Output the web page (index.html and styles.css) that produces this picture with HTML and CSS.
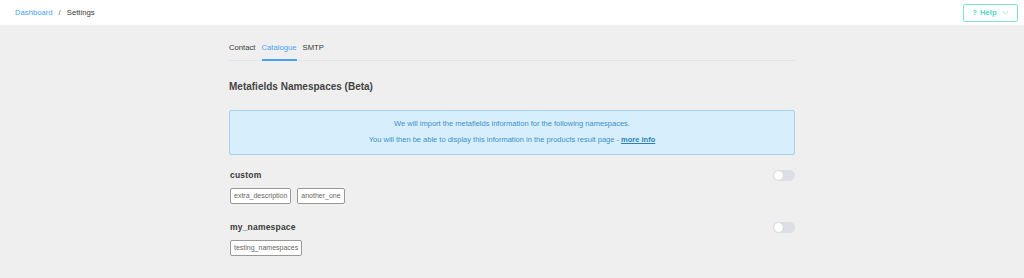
FILE: index.html
```html
<!DOCTYPE html>
<html>
<head>
<meta charset="utf-8">
<link rel="stylesheet" href="styles.css">
</head>
<body>
<header class="topbar">
  <nav class="crumbs">
    <a class="crumb-link" href="#">Dashboard</a>
    <span class="crumb-sep">/</span>
    <span class="crumb-current">Settings</span>
  </nav>
  <button class="help-btn"><span class="help-q">?</span> Help
    <svg class="chev" width="7" height="5" viewBox="0 0 7 5"><path d="M0.8 1.2 L3.5 3.8 L6.2 1.2" fill="none" stroke="currentColor" stroke-width="0.9"/></svg>
  </button>
</header>
<main class="content">
  <div class="tabs">
    <span class="tab">Contact</span>
    <span class="tab active">Catalogue</span>
    <span class="tab">SMTP</span>
  </div>
  <h2 class="title">Metafields Namespaces (Beta)</h2>
  <div class="alert">
    <p>We will import the metafields information for the following namespaces.</p>
    <p>You will then be able to display this information in the products result page - <a href="#" class="more">more info</a></p>
  </div>
  <section class="ns">
    <div class="ns-head">
      <span class="ns-name">custom</span>
      <span class="switch"><span class="knob"></span></span>
    </div>
    <div class="tags">
      <span class="tag">extra_description</span>
      <span class="tag">another_one</span>
    </div>
  </section>
  <section class="ns">
    <div class="ns-head">
      <span class="ns-name">my_namespace</span>
      <span class="switch"><span class="knob"></span></span>
    </div>
    <div class="tags">
      <span class="tag">testing_namespaces</span>
    </div>
  </section>
</main>
</body>
</html>
```
FILE: styles.css
```css
html, body { margin: 0; padding: 0; }
body {
  background: #efefef;
  font-family: "Liberation Sans", Arial, sans-serif;
  color: #303133;
  height: 278px;
  overflow: hidden;
}
.topbar {
  height: 25px;
  background: #fff;
  display: flex;
  align-items: center;
  justify-content: space-between;
  padding: 0 6px 0 15px;
  box-sizing: border-box;
}
.crumbs { font-size: 7.7px; display: flex; align-items: center; gap: 6px; }
.crumb-link { color: #4aa2f8; text-decoration: none; }
.crumb-sep { color: #606266; }
.crumb-current { color: #3a3a3a; }
.help-btn {
  width: 55px;
  height: 18px;
  border: 1px solid #7fe3d8;
  border-radius: 2px;
  background: #fff;
  color: #52d6c6;
  font-family: "Liberation Sans", Arial, sans-serif;
  font-size: 7.7px;
  font-weight: bold;
  display: flex;
  align-items: center;
  justify-content: center;
  gap: 3px;
  padding: 0;
}
.help-q { font-weight: bold; }
.chev { margin-left: 2px; color: #8be5da; }
.content {
  width: 566px;
  margin: 0 auto;
  padding-top: 12px;
}
.tabs {
  display: flex;
  gap: 6px;
  height: 24px;
  border-bottom: 1px solid #e2e4e9;
  box-sizing: border-box;
}
.tab {
  font-size: 7.7px;
  line-height: 21px;
  color: #3a3a3a;
  height: 24px;
  box-sizing: border-box;
}
.tab.active {
  color: #4aa2f8;
  border-bottom: 2px solid #4aa2f8;
}
.title {
  margin: 19px 0 0;
  font-size: 10px;
  line-height: 14px;
  font-weight: bold;
  color: #444;
}
.alert {
  margin-top: 16px;
  background: #d7effc;
  border: 1px solid #a3d3ee;
  border-radius: 2px;
  padding: 5px 0 6px;
  text-align: center;
  color: #3b8fc8;
  font-size: 7.5px;
}
.alert p { margin: 0; line-height: 16px; }
.more { color: #2f7fb8; font-weight: bold; text-decoration: underline; }
.ns { margin-top: 14px; }
.ns + .ns { margin-top: 17px; }
.ns-head {
  display: flex;
  justify-content: space-between;
  align-items: center;
  height: 12px;
}
.ns-name {
  font-size: 8.5px;
  font-weight: bold;
  color: #3a3a3a;
  letter-spacing: 0.2px;
  padding-left: 1px;
}
.switch {
  width: 22px;
  height: 11px;
  border-radius: 6px;
  background: #dcdfe6;
  display: flex;
  align-items: center;
  padding-left: 1px;
  box-sizing: border-box;
}
.knob {
  width: 9px;
  height: 9px;
  border-radius: 50%;
  background: #fff;
  box-shadow: 0 0 1px rgba(0,0,0,0.15);
}
.tags { display: flex; gap: 6px; margin-top: 7px; padding-left: 1px; }
.tag {
  font-size: 7px;
  line-height: 14px;
  padding: 0 3px;
  border: 1px solid #999;
  border-radius: 2px;
  background: #fff;
  color: #666;
}
```
